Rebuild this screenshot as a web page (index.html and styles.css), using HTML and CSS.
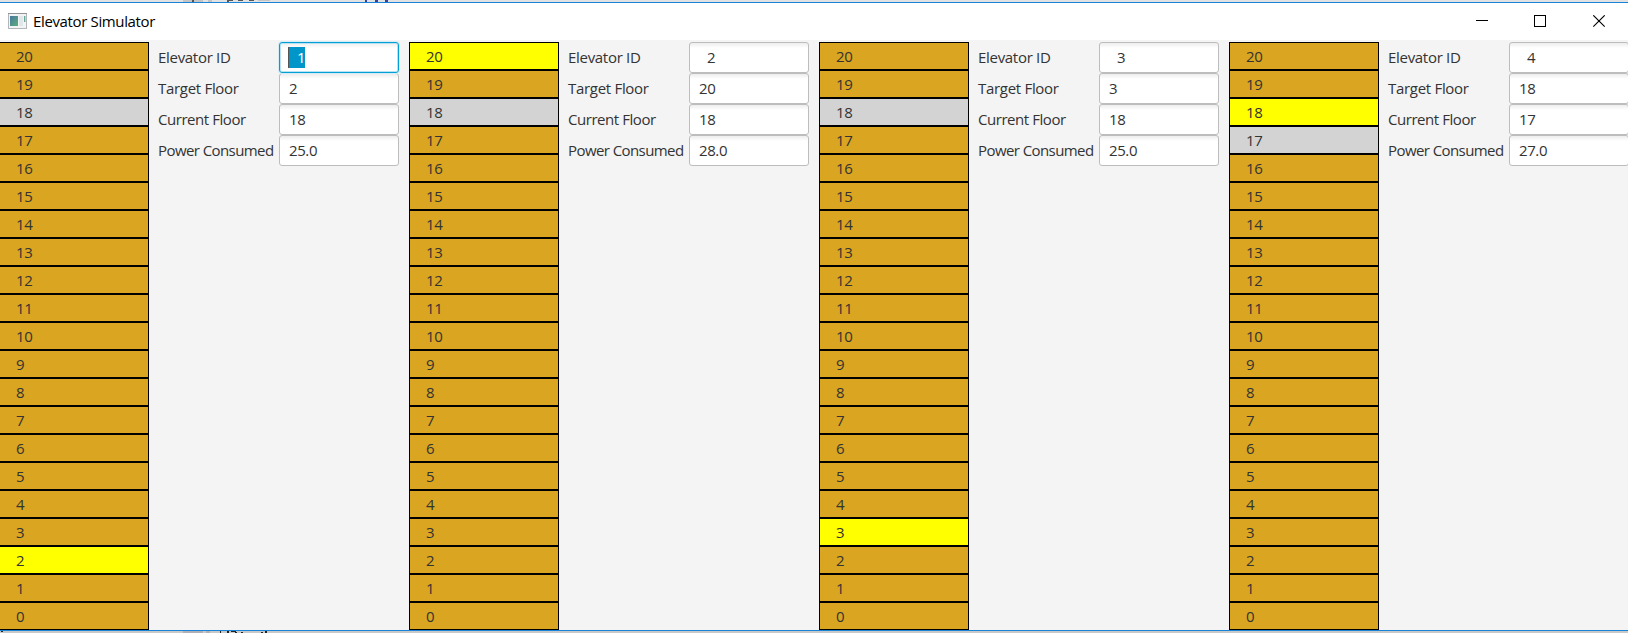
FILE: index.html
```html
<!DOCTYPE html>
<html lang="en">
<head>
<meta charset="utf-8">
<title>Elevator Simulator</title>
<link rel="stylesheet" href="styles.css">
</head>
<body>
<div class="desktop">
<svg class="strip strip-top" width="1628" height="2" viewBox="0 0 1628 2" shape-rendering="crispEdges"><path fill="#c4c4c4" d="M183 0h20v2h-20zM208 0h4v2h-4zM258 0h12v1h-12z"/><path fill="#555" d="M192 0h2v2h-2zM227 0h6v1h-6zM238 0h5v1h-5zM249 0h5v1h-5zM227 1h2v1h-2z"/><path fill="#3344a0" d="M365 0h2v2h-2zM375 0h3v2h-3zM385 0h3v2h-3z"/></svg>
<div class="window">
<header class="titlebar">
<svg class="app-icon" width="19" height="16" viewBox="0 0 19 16"><defs><linearGradient id="g" x1="0" y1="0" x2="1" y2="1"><stop offset="0" stop-color="#4a76a0"/><stop offset="1" stop-color="#58b07a"/></linearGradient></defs><rect x=".5" y=".5" width="18" height="15" fill="#f1f3f5" stroke="#b4b7ba"/><path d="M0 .5h19" stroke="#909498"/><rect x="2" y="3" width="8" height="10" fill="url(#g)"/><rect x="11" y="3" width="4" height="10" fill="#e2e6ea"/><rect x="16" y="3" width="1.400" height="6" fill="#67a996"/></svg>
<h1 class="title">Elevator Simulator</h1>
<svg class="controls" width="130" height="13" viewBox="0 0 130 13" fill="none" stroke="#000"><path d="M0 5.500h12M58.500 .5h11v11h-11z" shape-rendering="crispEdges"/><path d="M117.300 .3l11.400 11.400M128.700 .3l-11.400 11.400" stroke-width="1.100"/></svg>
</header>
<main class="content">
<section class="elevator">
<ol class="tower"><li>20</li><li>19</li><li class="current">18</li><li>17</li><li>16</li><li>15</li><li>14</li><li>13</li><li>12</li><li>11</li><li>10</li><li>9</li><li>8</li><li>7</li><li>6</li><li>5</li><li>4</li><li>3</li><li class="target">2</li><li>1</li><li>0</li></ol>
<dl class="info"><dt>Elevator ID</dt><dd class="id focused"><span class="selection">1</span></dd><dt>Target Floor</dt><dd>2</dd><dt class="now">Current Floor</dt><dd>18</dd><dt class="power">Power Consumed</dt><dd>25.0</dd></dl>
</section>
<section class="elevator">
<ol class="tower"><li class="target">20</li><li>19</li><li class="current">18</li><li>17</li><li>16</li><li>15</li><li>14</li><li>13</li><li>12</li><li>11</li><li>10</li><li>9</li><li>8</li><li>7</li><li>6</li><li>5</li><li>4</li><li>3</li><li>2</li><li>1</li><li>0</li></ol>
<dl class="info"><dt>Elevator ID</dt><dd class="id">2</dd><dt>Target Floor</dt><dd>20</dd><dt class="now">Current Floor</dt><dd>18</dd><dt class="power">Power Consumed</dt><dd>28.0</dd></dl>
</section>
<section class="elevator">
<ol class="tower"><li>20</li><li>19</li><li class="current">18</li><li>17</li><li>16</li><li>15</li><li>14</li><li>13</li><li>12</li><li>11</li><li>10</li><li>9</li><li>8</li><li>7</li><li>6</li><li>5</li><li>4</li><li class="target">3</li><li>2</li><li>1</li><li>0</li></ol>
<dl class="info"><dt>Elevator ID</dt><dd class="id">3</dd><dt>Target Floor</dt><dd>3</dd><dt class="now">Current Floor</dt><dd>18</dd><dt class="power">Power Consumed</dt><dd>25.0</dd></dl>
</section>
<section class="elevator">
<ol class="tower"><li>20</li><li>19</li><li class="target">18</li><li class="current">17</li><li>16</li><li>15</li><li>14</li><li>13</li><li>12</li><li>11</li><li>10</li><li>9</li><li>8</li><li>7</li><li>6</li><li>5</li><li>4</li><li>3</li><li>2</li><li>1</li><li>0</li></ol>
<dl class="info"><dt>Elevator ID</dt><dd class="id">4</dd><dt>Target Floor</dt><dd>18</dd><dt class="now">Current Floor</dt><dd>17</dd><dt class="power">Power Consumed</dt><dd>27.0</dd></dl>
</section>
</main>
</div>
<svg class="strip strip-bottom" width="1628" height="2" viewBox="0 0 1628 2" shape-rendering="crispEdges"><path fill="#b0b0b8" d="M183 0h20v2h-20zM206 0h4v2h-4z"/><path fill="#222" d="M1 0h2v1h-2zM220 0h1v2h-1zM227 0h2v2h-2zM231 0h5v1h-5zM235 1h2v1h-2zM241 1h2v1h-2zM261 1h2v1h-2zM265 0h2v2h-2z"/></svg>
</div>
</body>
</html>
```
FILE: styles.css
```css
* { box-sizing: border-box; margin: 0; padding: 0; }
body { font-family: "Open Sans", "Noto Sans", sans-serif; font-size: 15px; color: #333; overflow: hidden; }
.desktop { width: 1628px; height: 633px; overflow: hidden; display: flex; flex-direction: column; }
.strip { display: block; flex: none; }
.strip-top { background: #e2e2e2; }
.strip-bottom { background: #c9c9c9; }
.window { height: 629px; border-top: 1px solid #1883d7; border-bottom: 1px solid #1883d7; display: flex; flex-direction: column; background: #f4f4f4; }
.titlebar { height: 37px; flex: none; background: #fff; display: flex; align-items: center; padding: 0 22px 0 8px; }
.app-icon { flex: none; margin-bottom: 1px; }
.title { margin-left: 6px; font-size: 15px; font-weight: 400; color: #000; letter-spacing: -0.36px; white-space: nowrap; padding-bottom: 2px; }
.controls { margin-left: auto; flex: none; }
.content { display: flex; width: 1640px; margin-left: -1px; padding-top: 2px; }
.elevator { display: flex; width: 410px; flex: none; align-items: flex-start; }
.tower { width: 150px; list-style: none; flex: none; }
.tower li { height: 28px; border: 1px solid #000; background: #daa520; padding-left: 16px; line-height: 26px; letter-spacing: -0.4px; }
.tower .target { background: #ff0; }
.tower .current { background: #d3d3d3; }
.info { display: grid; grid-template-columns: 121px 120px; grid-auto-rows: 31px; margin-left: 9px; line-height: 31px; letter-spacing: -0.3px; white-space: nowrap; }
.info .now { letter-spacing: -0.45px; }
.info .power { letter-spacing: -0.58px; }
.info dd { border: 1px solid #bdbdbd; border-radius: 3px; background: linear-gradient(#ededed, #fff 5px); padding-left: 9px; line-height: 29px; letter-spacing: -0.4px; }
.info .id { padding-left: 17px; }
.info .focused { border-color: #039ed3; box-shadow: inset 0 0 0 1px #b8e2f2, 0 0 0 1px #d5edf6; padding: 4px 0 0 8px; position: relative; z-index: 1; }
.selection { display: block; width: 17px; height: 21px; padding-left: 8px; background: #0096c9; color: #fff; border-left: 1px solid #555; line-height: 21px; }
```
